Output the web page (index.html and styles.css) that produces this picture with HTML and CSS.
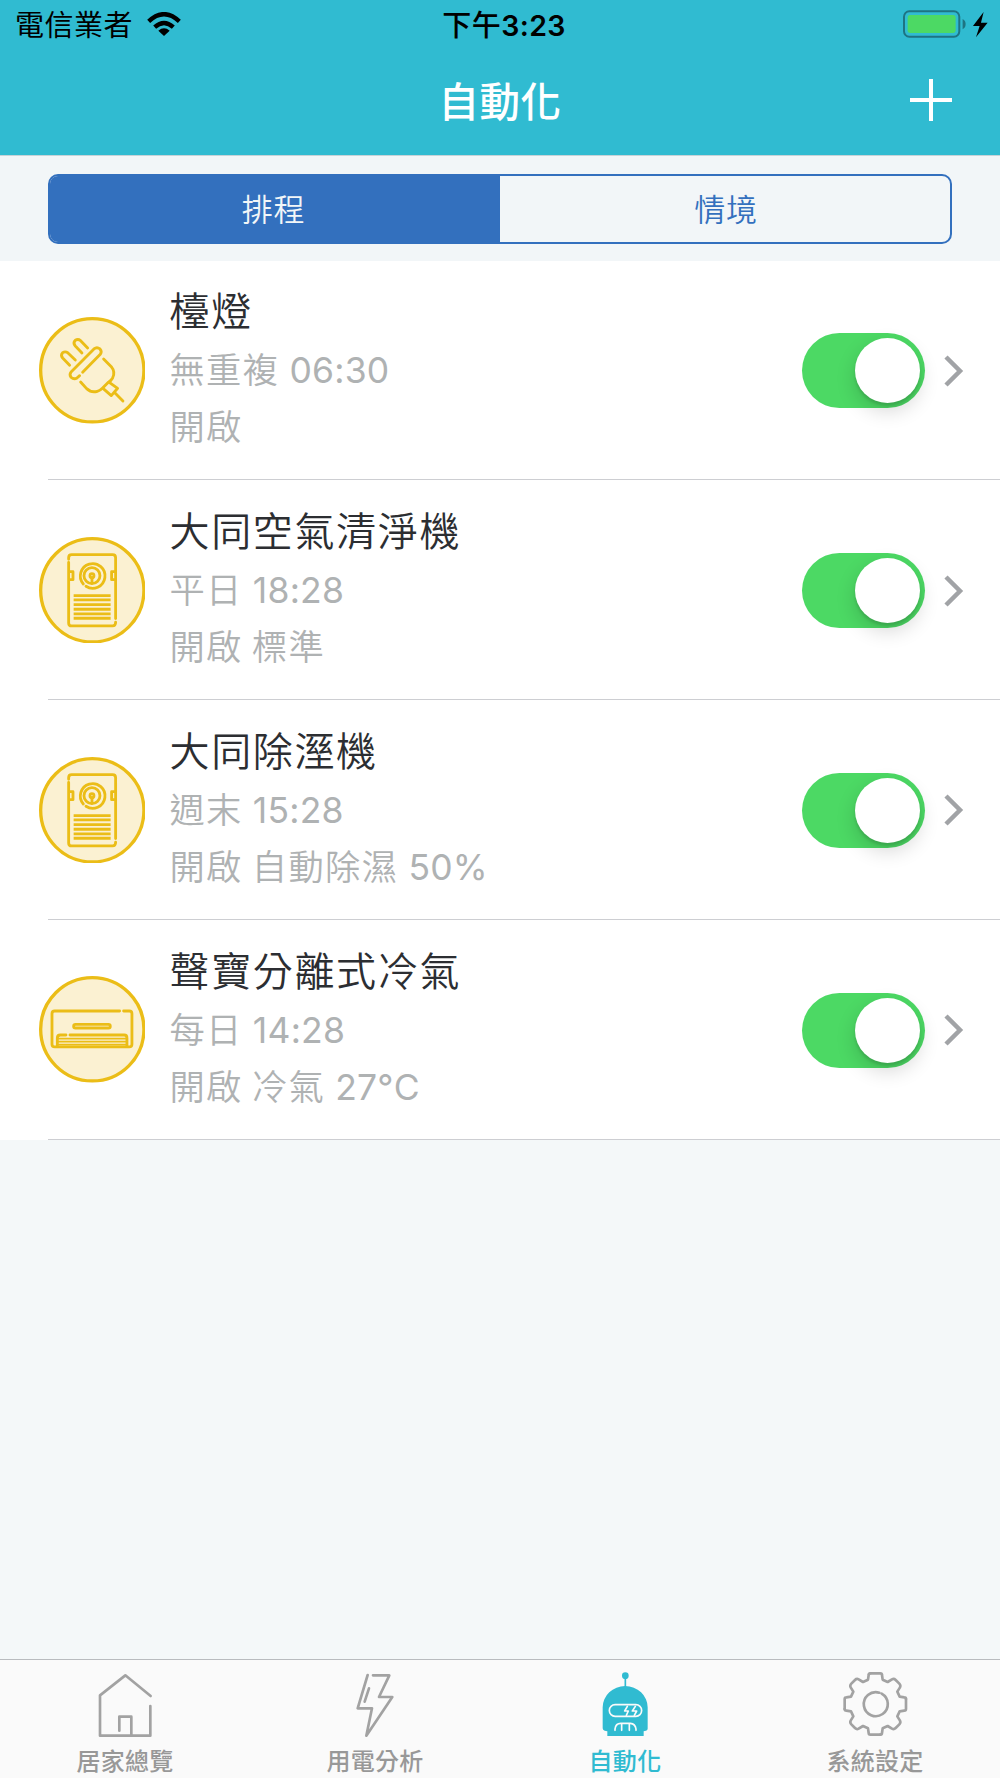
FILE: index.html
```html
<!DOCTYPE html>
<html lang="zh-Hant">
<head>
<meta charset="utf-8">
<title>自動化</title>
<link rel="stylesheet" href="styles.css">
</head>
<body>
<svg class="defs" aria-hidden="true">
  <symbol id="purifier" viewBox="56 110 320 320">
    <circle class="disc" cx="216" cy="270" r="155"/>
    <g class="line">
      <path d="M145 177V172Q145 163 154 163H277Q286 163 286 172V355M145 186V368Q145 377 154 377H277Q286 377 286 366"/>
      <path d="M147 214H158V238H147M285 214H274V238H285"/>
      <path d="M189 251A37 37 0 1 1 197 258"/>
      <circle cx="215" cy="226" r="24"/>
      <circle cx="215" cy="226" r="6"/>
      <path d="M215 232V248"/>
      <path d="M160 286H271M160 299H271M160 313H271M160 327H271M160 341H271M160 354H271" stroke-linecap="butt"/>
    </g>
  </symbol>
</svg>
<div class="app">
  <header class="top">
    <div class="status">
      <div class="carrier">
        <span>電信業者</span>
        <svg class="wifi" viewBox="0 0 102 72">
          <path d="M51 72L34 56Q51 42 68 56Z"/>
          <path d="M23 45.500Q51 20 79 45.500" fill="none" stroke="#000" stroke-width="13"/>
          <path d="M5 28Q51 -15 97 28" fill="none" stroke="#000" stroke-width="13"/>
        </svg>
      </div>
      <div class="time">下午<span class="num">3:23</span></div>
      <div class="power">
        <svg class="battery" viewBox="0 0 256 84">
          <rect x="3" y="4" width="166" height="76" rx="16" fill="none" stroke="#1e7482" stroke-width="6"/>
          <rect x="14" y="15" width="144" height="54" rx="8" fill="#4cd964"/>
          <path d="M179 27Q188 32 188 42Q188 53 179 58Z" fill="#1e7482"/>
          <path d="M242 6L210 48H230L219 82L254 38H234Z"/>
        </svg>
      </div>
    </div>
    <div class="nav">
      <h1>自動化</h1>
      <svg class="plus" viewBox="0 0 42 42"><path d="M21 0V42M0 21H42"/></svg>
    </div>
  </header>
  <div class="segment-bar">
    <div class="segment">
      <div class="seg on">排程</div>
      <div class="seg">情境</div>
    </div>
  </div>
  <main class="list">
    <div class="row">
      <svg class="icon" viewBox="56 141 320 320">
        <circle class="disc" cx="216" cy="301" r="155"/>
        <g class="line">
          <path d="M148 286L127 264Q120 256 127 248Q135 243 143 249L165 270"/>
          <path d="M185 249L165 228Q157 219 165 211Q173 206 181 212L202 234"/>
          <path d="M187 307L240 253Q246 245 239 237Q230 230 221 237L153 305Q146 313 152 322Q161 330 170 324L178 317"/>
          <path d="M250 267L273 290Q286 306 277 324Q272 333 265 336L247 354Q239 362 231 364Q213 369 199 356L181 336"/>
          <path d="M267 337L292 355L273 377L249 356M285 370L308 393"/>
        </g>
      </svg>
      <div class="info">
        <div class="name">檯燈</div>
        <div class="sub">無重複 <span class="num">06:30</span></div>
        <div class="sub">開啟</div>
      </div>
      <div class="switch"><i></i></div>
      <svg class="chevron" viewBox="0 0 20 32"><path d="M2 2L16 16L2 30"/></svg>
    </div>
    <div class="row">
      <svg class="icon"><use href="#purifier"/></svg>
      <div class="info">
        <div class="name">大同空氣清淨機</div>
        <div class="sub">平日 <span class="num">18:28</span></div>
        <div class="sub">開啟 標準</div>
      </div>
      <div class="switch"><i></i></div>
      <svg class="chevron" viewBox="0 0 20 32"><path d="M2 2L16 16L2 30"/></svg>
    </div>
    <div class="row">
      <svg class="icon"><use href="#purifier"/></svg>
      <div class="info">
        <div class="name">大同除溼機</div>
        <div class="sub">週末 <span class="num">15:28</span></div>
        <div class="sub">開啟 自動除濕 <span class="num">50%</span></div>
      </div>
      <div class="switch"><i></i></div>
      <svg class="chevron" viewBox="0 0 20 32"><path d="M2 2L16 16L2 30"/></svg>
    </div>
    <div class="row">
      <svg class="icon" viewBox="56 110 320 320">
        <circle class="disc" cx="216" cy="270" r="155"/>
        <g class="line">
          <path d="M298 215H103Q95 215 95 223V315Q95 323 103 323H327Q335 323 335 315V223Q335 215 327 215H310"/>
          <rect x="160" y="255" width="110" height="11" rx="5.500"/>
          <path d="M111 321V296Q111 287 120 287H137M149 287H312Q320 287 320 296V321"/>
          <path d="M113 298H318M113 307H318M113 316H318" stroke-width="5"/>
        </g>
      </svg>
      <div class="info">
        <div class="name">聲寶分離式冷氣</div>
        <div class="sub">每日 <span class="num">14:28</span></div>
        <div class="sub">開啟 冷氣 <span class="num">27°C</span></div>
      </div>
      <div class="switch"><i></i></div>
      <svg class="chevron" viewBox="0 0 20 32"><path d="M2 2L16 16L2 30"/></svg>
    </div>
  </main>
  <nav class="tabs">
    <div class="tab">
      <svg viewBox="275 60 200 204"><path d="M451 138L375 76L299 136V257H450V168M357 242V200H393V255"/></svg>
      <span>居家總覽</span>
    </div>
    <div class="tab">
      <svg viewBox="1025 60 200 204"><path d="M1102 75L1072 175H1115L1098 257L1176 141H1136L1167 76H1118M1106 115L1093 155"/></svg>
      <span>用電分析</span>
    </div>
    <div class="tab active">
      <svg viewBox="274 60 200 204">
        <circle class="solid" cx="374" cy="77" r="10"/>
        <path d="M374 84V112" stroke-width="5"/>
        <path class="solid" d="M306 172A67.500 64 0 0 1 441 172V236Q441 241 436 242L429 244V258H320V244L312 242Q306 240 306 235Z"/>
        <rect class="cut" x="326" y="164" width="97" height="35" rx="17.500"/>
        <path class="cut" d="M380 169L372 183H383L377 196M404 169L395 183H408L401 196"/>
        <path class="cut" d="M343 241V237Q345 220 360 220H389Q404 221 406 237V241M363 221V241M386 221V241"/>
      </svg>
      <span>自動化</span>
    </div>
    <div class="tab">
      <svg viewBox="-100 -102 200 204">
        <g id="quarter"><path d="M-15 -92H15Q20 -92 20 -87L22 -73L37 -66L50 -74Q56 -77 61 -72L72 -61Q77 -56 74 -50L66 -37L73 -22L87 -20Q92 -20 92 -15"/></g>
        <use href="#quarter" transform="rotate(90)"/>
        <use href="#quarter" transform="rotate(180)"/>
        <use href="#quarter" transform="rotate(270)"/>
        <path d="M19 -31A36 36 0 1 1 12 -34"/>
      </svg>
      <span>系統設定</span>
    </div>
  </nav>
</div>
</body>
</html>
```
FILE: styles.css
```css
* { box-sizing: border-box; }
body {
  margin: 0;
  font-family: "Noto Sans CJK TC", sans-serif;
}
svg { display: block; flex: none; }
.defs { width: 0; height: 0; position: absolute; }
.app {
  width: 1000px;
  height: 1778px;
  display: flex;
  flex-direction: column;
  background: #f4f8f9;
  overflow: hidden;
}
.num { font-family: Inter, sans-serif; line-height: 0; }

.top {
  height: 156px;
  flex: none;
  background: #30bbd1;
  border-bottom: 1px solid #c6d3d8;
}
.status {
  height: 46px;
  padding: 0 12px 0 15px;
  display: grid;
  grid-template-columns: 1fr auto 1fr;
  align-items: center;
  font-size: 29px;
  letter-spacing: .5px;
  line-height: 46px;
}
.carrier { display: flex; align-items: center; gap: 14px; }
.wifi { width: 34px; height: 24px; margin-top: 1px; }
.time { font-weight: 500; padding-left: 5px; }
.time .num { font-weight: 600; font-size: 28.5px; letter-spacing: .4px; }
.power { display: flex; justify-content: flex-end; }
.battery { width: 85.300px; height: 28px; margin-top: 2px; }
.nav {
  height: 109px;
  padding: 0 48px;
  display: grid;
  grid-template-columns: 1fr auto 1fr;
  align-items: center;
}
.nav h1 {
  grid-column: 2;
  margin: 0 0 2px;
  font-size: 40.5px;
  font-weight: 500;
  letter-spacing: .5px;
  line-height: 100px;
  color: #fff;
}
.plus { width: 42px; height: 42px; justify-self: end; margin-top: -1px; }
.plus path { stroke: #fff; stroke-width: 4; }

.segment-bar {
  height: 105px;
  flex: none;
  padding: 18px 48px 17px;
  background: #f2f6f8;
}
.segment {
  height: 70px;
  display: flex;
  border: 2px solid #3370be;
  border-radius: 10px;
  overflow: hidden;
}
.seg {
  width: 50%;
  padding-left: 2px;
  font-size: 31px;
  letter-spacing: .8px;
  line-height: 63px;
  text-align: center;
  color: #3370be;
  font-weight: 350;
}
.seg.on { padding: 0 3px 0 0; background: #3370be; color: #f2f6f8; }

.list { flex: none; background: #fff; }
.row {
  height: 219.800px;
  padding: 0 36px 0 38.500px;
  display: flex;
  align-items: center;
  background: linear-gradient(#cdced2, #cdced2) 48px 100% / 100% 1.330px no-repeat;
}
.icon { width: 106.600px; height: 106.600px; margin-bottom: 1px; }
.disc { fill: #fbf1d2; stroke: #ebbd17; stroke-width: 10; }
.line {
  fill: none;
  stroke: #ebbd17;
  stroke-width: 8.500;
  stroke-linecap: round;
  stroke-linejoin: round;
}
.info { flex: 1; padding: 0 0 9px 24.400px; white-space: nowrap; }
.name {
  font-size: 40px;
  font-weight: 350;
  letter-spacing: 1.650px;
  line-height: 60px;
  color: #2c2e32;
}
.sub {
  font-size: 35.300px;
  font-weight: 350;
  letter-spacing: 1.300px;
  line-height: 57px;
  color: #afb2b3;
}
.sub .num { font-size: 35.500px; font-weight: 400; letter-spacing: .2px; margin-left: 1px; }
.switch {
  width: 123px;
  height: 75px;
  flex: none;
  padding: 5px;
  display: flex;
  justify-content: flex-end;
  border-radius: 38px;
  background: #4cd964;
}
.switch i {
  width: 65px;
  height: 65px;
  border-radius: 50%;
  background: #fff;
  box-shadow: 0 8px 20px rgba(0, 0, 0, .16), 0 3px 3px rgba(0, 0, 0, .12);
}
.chevron { width: 20px; height: 32px; margin-left: 19px; }
.chevron path { fill: none; stroke: #a1a3a6; stroke-width: 4.500; }

.tabs {
  height: 119px;
  margin-top: auto;
  flex: none;
  display: flex;
  background: #fafafa;
  border-top: 1.500px solid #b9bcbf;
}
.tab {
  flex: 1;
  padding: 10px 0 0;
  display: flex;
  flex-direction: column;
  align-items: center;
  color: #989898;
}
.tab svg {
  width: 66.670px;
  height: 68px;
  fill: none;
  stroke: #a2a2a2;
  stroke-width: 8;
  stroke-linejoin: round;
  stroke-linecap: round;
}
.tab span {
  margin-top: 4px;
  font-size: 24px;
  font-weight: 500;
  letter-spacing: .3px;
  line-height: 36px;
}
.tab.active { color: #30bbd1; }
.tab.active svg { stroke: #30bbd1; }
.tab .solid { fill: #30bbd1; stroke: none; }
.tab .cut { stroke: #fafafa; stroke-width: 5; }
```
